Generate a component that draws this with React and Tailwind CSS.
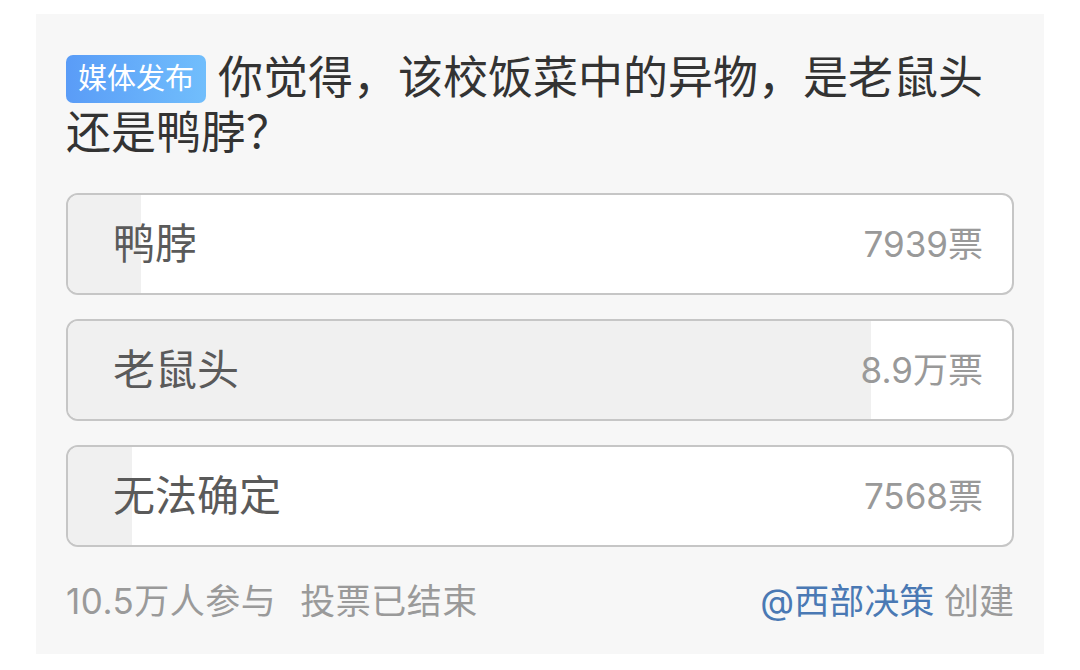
import React from "react";

const options = [
  { label: "鸭脖", count: "7939票", pct: 7.73 },
  { label: "老鼠头", count: "8.9万票", pct: 85.06 },
  { label: "无法确定", count: "7568票", pct: 6.78 },
];

export default function App() {
  return (
    <div
      className="w-[1080px] h-[670px] bg-white pt-[14px] px-[36px]"
      style={{ fontFamily: 'Inter, "Noto Sans CJK SC", "Noto Sans", sans-serif' }}
    >
      <div className="w-[1008px] h-[640px] bg-[#f7f7f7] px-[30px] pt-[36px]">
        <div className="text-[45px] leading-[55px] text-[#333333]">
          <span className="inline-block align-middle -my-[10px] -translate-y-[3px] h-[48px] leading-[48px] px-[12px] mr-[12px] rounded-[7px] bg-gradient-to-r from-[#5a9cf7] to-[#71befc] text-white text-[29px]">
            媒体发布
          </span>
          你觉得，该校饭菜中的异物，是老鼠头还是鸭脖？
        </div>

        <div className="mt-[33px] flex flex-col gap-[24px]">
          {options.map((o) => (
            <div
              key={o.label}
              className="relative h-[102px] rounded-[12px] border-2 border-[#c6c6c6] bg-white overflow-hidden"
            >
              <div
                className="absolute left-0 top-0 bottom-0 bg-[#f0f0f0]"
                style={{ width: `${o.pct}%` }}
              />
              <div className="relative h-full flex items-center justify-between pl-[45px] pr-[29px]">
                <span className="text-[42px] text-[#5a5a5a] leading-none">{o.label}</span>
                <span className="text-[35px] text-[#999999] leading-none">{o.count}</span>
              </div>
            </div>
          ))}
        </div>

        <div className="mt-[37px] flex items-center justify-between text-[35px] leading-none text-[#9a9a9a]">
          <span>
            <span className="tracking-[0.5px]">10.5万人参与</span>
            <span className="ml-[24px] tracking-[0.5px]">投票已结束</span>
          </span>
          <span>
            <span className="text-[#4a79b4]">@西部决策</span> 创建
          </span>
        </div>
      </div>
    </div>
  );
}
